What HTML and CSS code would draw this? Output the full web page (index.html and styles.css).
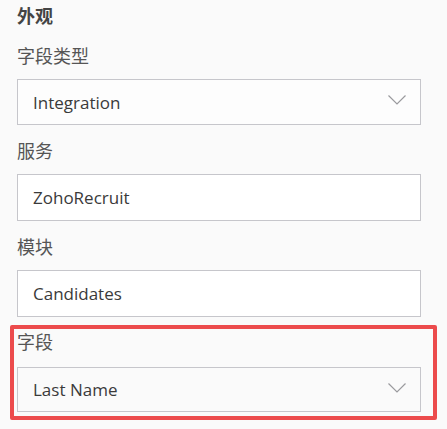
FILE: index.html
```html
<!DOCTYPE html>
<html lang="zh">
<head>
<meta charset="utf-8">
<link rel="stylesheet" href="styles.css">
</head>
<body>
<div class="panel">
  <div class="title">外观</div>
  <div class="field">
    <div class="label">字段类型</div>
    <div class="box select soft">
      <span class="value">Integration</span>
      <svg class="chev" width="18" height="10" viewBox="0 0 18 10"><polyline points="0.5,0.5 9,9 17.5,0.5" fill="none" stroke="#9a9a9e" stroke-width="1.2"/></svg>
    </div>
  </div>
  <div class="field">
    <div class="label">服务</div>
    <div class="box"><span class="value">ZohoRecruit</span></div>
  </div>
  <div class="field">
    <div class="label">模块</div>
    <div class="box"><span class="value">Candidates</span></div>
  </div>
  <div class="highlight">
    <div class="label hl-label">字段</div>
    <div class="box select grey">
      <span class="value">Last Name</span>
      <svg class="chev" width="18" height="10" viewBox="0 0 18 10"><polyline points="0.5,0.5 9,9 17.5,0.5" fill="none" stroke="#9a9a9e" stroke-width="1.2"/></svg>
    </div>
  </div>
</div>
</body>
</html>
```

FILE: styles.css
```css
html, body {
  margin: 0;
  padding: 0;
  background: #fafafa;
}
body {
  font-family: "Noto Sans CJK SC", "Noto Sans", sans-serif;
  color: #555;
}
.panel {
  padding: 3px 0 0 17px;
  width: 404px;
}
.title {
  font-size: 18px;
  font-weight: bold;
  line-height: 24px;
  color: #444;
  height: 24px;
  margin-bottom: 3px;
}
.field {
  padding-top: 13px;
}
.label {
  font-size: 18px;
  line-height: 24px;
  height: 24px;
  margin-bottom: 12px;
  color: #555;
}
.box {
  box-sizing: border-box;
  height: 47px;
  border: 1px solid #c6c6cb;
  background: #fff;
  display: flex;
  align-items: center;
  justify-content: space-between;
  padding: 0 14px 0 15px;
}
.box.soft { background: #fdfdfd; height: 46px; }
.box.grey { background: #fafafa; height: 45px; }
.value {
  font-family: "Open Sans", "Noto Sans", sans-serif;
  font-size: 17px;
  color: #3a3a3a;
}
.chev { display: block; margin-top: -4px; }
.highlight {
  margin: 8px -16px 0 -7px;
  border: 4px solid #ec4b4c;
  border-radius: 2px;
  padding: 0 12px 4px 3px;
}
.hl-label {
  margin-bottom: 14px;
}
```
